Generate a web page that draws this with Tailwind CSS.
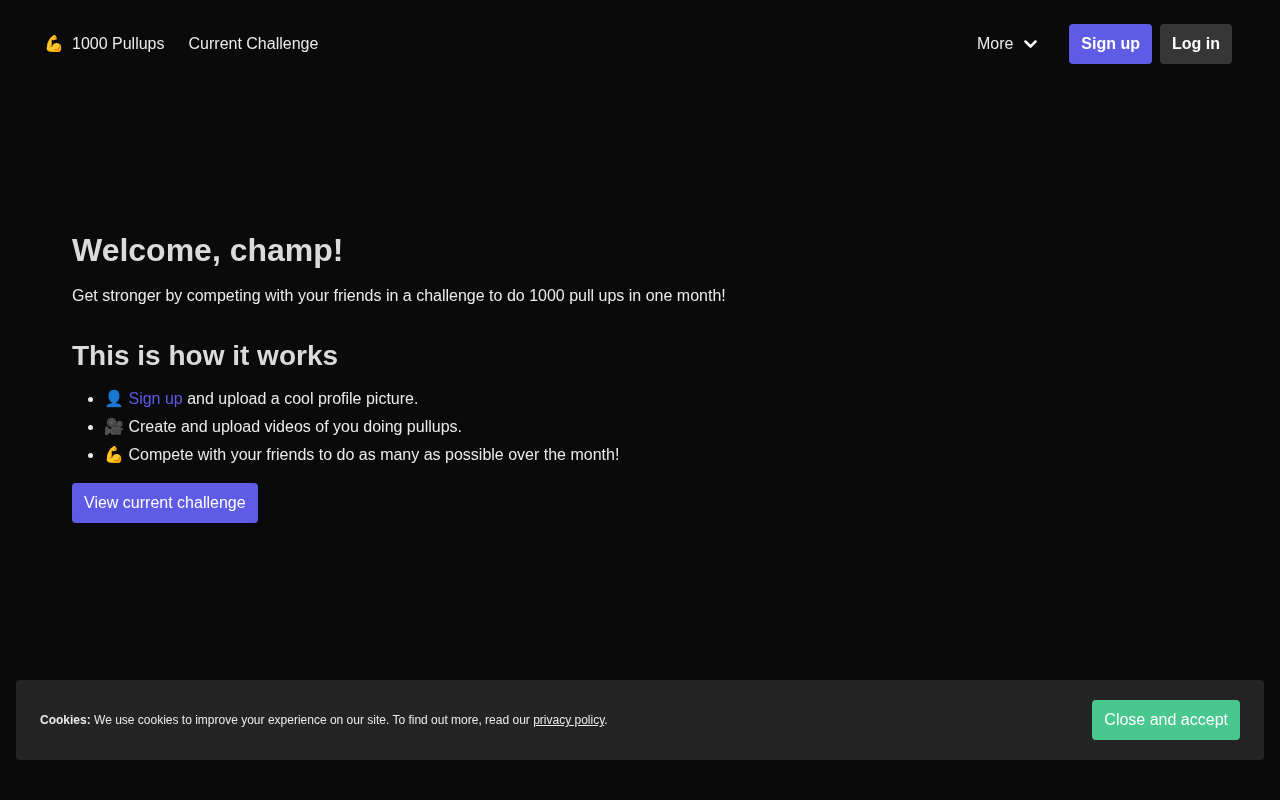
<!DOCTYPE html>
<html lang="en">
<head>
    <meta charset="UTF-8">
    <meta name="viewport" content="width=device-width, initial-scale=1.0">
    <title>1000 Pullups</title>
    <script src="https://cdn.jsdelivr.net/npm/@tailwindcss/browser@4"></script>
</head>
<body class="bg-[#0a0a0a] text-[#ebebeb] font-['Liberation_Sans',Arial,sans-serif] text-base h-screen overflow-hidden">
  <div class="will-change-transform">
    <!-- Navbar -->
    <nav class="flex items-center justify-between pl-[44px] pr-[48px] pt-[24px] h-[88px] pb-[24px]">
        <div class="flex items-center gap-6">
            <a href="#" class="flex items-center gap-2">
                <span>💪</span>
                <span>1000 Pullups</span>
            </a>
            <a href="#">Current Challenge</a>
        </div>
        <div class="flex items-center">
            <a href="#" class="flex items-center gap-[11px] mr-[32px]">
                <span>More</span>
                <svg class="w-[13px] h-[9px]" viewBox="0 0 13 9" fill="none" stroke="white" stroke-width="2.5" stroke-linecap="round" stroke-linejoin="round"><path d="M1.5 1.5 L6.5 6.5 L11.5 1.5"/></svg>
            </a>
            <div class="flex gap-2">
                <a href="#" class="h-10 px-3 flex items-center rounded bg-[#5e5be6] text-white font-bold">Sign up</a>
                <a href="#" class="h-10 px-3 flex items-center rounded bg-[#363636] text-white font-bold">Log in</a>
            </div>
        </div>
    </nav>

    <!-- Main content -->
    <main class="pl-[72px] pt-[142px]">
        <h1 class="text-[32px] leading-[40px] font-bold text-[#dbdbdb]">Welcome, champ!</h1>
        <p class="mt-[14px] leading-6">Get stronger by competing with your friends in a challenge to do 1000 pull ups in one month!</p>
        <h2 class="mt-[30px] text-[28px] leading-[36px] font-bold text-[#dbdbdb]">This is how it works</h2>
        <ul class="list-disc pl-8 mt-[12px]">
            <li class="h-7 leading-6 pt-px">👤 <a href="#" class="text-[#5e5be6]">Sign up</a> and upload a cool profile picture.</li>
            <li class="h-7 leading-6 pt-px">🎥 Create and upload videos of you doing pullups.</li>
            <li class="h-7 leading-6 pt-px">💪 Compete with your friends to do as many as possible over the month!</li>
        </ul>
        <a href="#" class="mt-[13px] inline-flex h-10 px-3 items-center rounded bg-[#5e5be6] text-white">View current challenge</a>
    </main>
  </div>

    <!-- Cookie banner -->
    <div class="fixed left-4 right-4 bottom-10 h-20 rounded bg-[#242424] flex items-center justify-between pl-6 pr-6 will-change-transform">
        <p class="text-xs"><strong>Cookies:</strong> We use cookies to improve your experience on our site. To find out more, read our <a href="#" class="underline">privacy policy</a>.</p>
        <button class="h-10 px-3 rounded bg-[#48c78e] text-white">Close and accept</button>
    </div>
</body>
</html>
